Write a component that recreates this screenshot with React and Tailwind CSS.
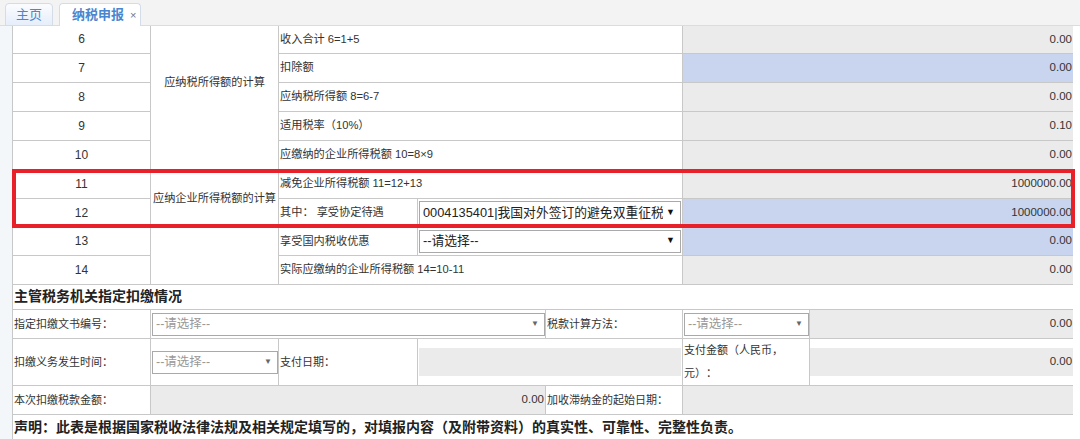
import React from 'react';

const bd = 'border border-[#c8c8c8]';

const rows = [
  { n: 6, label: '收入合计 6=1+5', v: '0.00' },
  { n: 7, label: '扣除额', v: '0.00', blue: true },
  { n: 8, label: '应纳税所得额 8=6-7', v: '0.00' },
  { n: 9, label: '适用税率（10%）', v: '0.10' },
  { n: 10, label: '应缴纳的企业所得税额 10=8×9', v: '0.00' },
];

function Select({ text, dim, small, className = '' }) {
  return (
    <div className={`flex items-center bg-white border border-[#a9a9a9] ${className}`}>
      <span className={`flex-1 min-w-0 overflow-hidden whitespace-nowrap pl-[3px] ${dim ? 'text-[#999] text-[12.5px]' : 'text-[#222] text-[12.8px]'}`}>{text}</span>
      <span className={`shrink-0 pl-[3px] pr-[5px] ${small ? 'text-[8px] text-[#666]' : 'text-[9px] text-[#111]'}`}>▼</span>
    </div>
  );
}

function Val({ v, blue }) {
  return (
    <td className={`${bd} ${blue ? 'bg-[#c9d5ee]' : 'bg-[#ebebeb]'} text-right pr-[1px] text-[11.5px] text-[#333]`}>{v}</td>
  );
}

export default function App() {
  return (
    <div className="w-[1080px] h-[439px] overflow-hidden bg-white text-[#333] [text-spacing-trim:space-all]" style={{ fontFamily: '"Liberation Sans","Noto Sans CJK SC",sans-serif' }}>
      {/* tabs */}
      <div className="h-[26px] bg-[#f3f3f3] border-b border-[#dcdcdc] flex items-end pl-[5px] gap-[6px]">
        <div className="h-[23px] w-[48px] -mb-px rounded-t-[4px] border border-[#d4dce8] bg-gradient-to-b from-[#fbfcfe] to-[#e6eefa] flex items-center justify-center text-[13px] text-[#4a86d0]">主页</div>
        <div className="h-[23px] w-[82px] -mb-px rounded-t-[4px] border border-b-0 border-[#d4dce8] bg-white flex items-center pl-[12px] gap-[6px]">
          <span className="text-[13px] font-bold text-[#4a86d0]">纳税申报</span>
          <span className="text-[11px] text-[#777]">×</span>
        </div>
      </div>

      <div className="relative flex">
        <div className="w-[12px] shrink-0 bg-[#f4f7fa]" />
        <div className="w-[1061px] shrink-0">
          <table className="w-[1061px] table-fixed border-collapse text-[11.2px]">
            <colgroup>
              <col className="w-[138px]" />
              <col className="w-[128px]" />
              <col className="w-[139px]" />
              <col className="w-[265px]" />
              <col className="w-[391px]" />
            </colgroup>
            <tbody>
              {rows.map((r, i) => (
                <tr key={r.n} className={i === 0 ? 'h-[27px]' : 'h-[29px]'}>
                  <td className={`${bd} ${i === 0 ? 'border-t-0' : ''} text-center text-[12px]`}>{r.n}</td>
                  {i === 0 && (
                    <td rowSpan={5} className={`${bd} border-t-0 text-center align-middle pb-[30px]`}>应纳税所得额的计算</td>
                  )}
                  <td colSpan={2} className={`${bd} ${i === 0 ? 'border-t-0' : ''} pl-[1px]`}>{r.label}</td>
                  <td className={`${bd} ${i === 0 ? 'border-t-0' : ''} ${r.blue ? 'bg-[#c9d5ee]' : 'bg-[#ebebeb]'} text-right pr-[1px] text-[11.5px]`}>{r.v}</td>
                </tr>
              ))}
              <tr className="h-[29px]">
                <td className={`${bd} text-center text-[12px]`}>11</td>
                <td rowSpan={2} className={`${bd} text-center whitespace-nowrap px-0`}>应纳企业所得税额的计算</td>
                <td colSpan={2} className={`${bd} pl-[1px]`}>减免企业所得税额 11=12+13</td>
                <Val v="1000000.00" />
              </tr>
              <tr className="h-[29px]">
                <td className={`${bd} text-center text-[12px]`}>12</td>
                <td className={`${bd} pl-[1px]`}>其中： 享受协定待遇</td>
                <td className={`${bd} p-0`}>
                  <Select text="0004135401|我国对外签订的避免双重征税协定" className="h-[24px] mx-px" />
                </td>
                <Val v="1000000.00" blue />
              </tr>
              <tr className="h-[28px]">
                <td className={`${bd} text-center text-[12px]`}>13</td>
                <td rowSpan={2} className={bd}></td>
                <td className={`${bd} pl-[1px]`}>享受国内税收优惠</td>
                <td className={`${bd} p-0`}>
                  <Select text="--请选择--" className="h-[23px] mx-px" />
                </td>
                <Val v="0.00" blue />
              </tr>
              <tr className="h-[29px]">
                <td className={`${bd} text-center text-[12px]`}>14</td>
                <td colSpan={2} className={`${bd} pl-[1px]`}>实际应缴纳的企业所得税额 14=10-11</td>
                <Val v="0.00" />
              </tr>
            </tbody>
          </table>

          <table className="w-[1061px] table-fixed border-collapse text-[11px]">
            <colgroup>
              <col className="w-[138px]" />
              <col className="w-[128px]" />
              <col className="w-[139px]" />
              <col className="w-[128px]" />
              <col className="w-[137px]" />
              <col className="w-[127px]" />
              <col className="w-[264px]" />
            </colgroup>
            <tbody>
              <tr className="h-[25px]">
                <td colSpan={7} className={`${bd} border-t-0 pl-px text-[14px] font-bold text-[#222]`}>主管税务机关指定扣缴情况</td>
              </tr>
              <tr className="h-[29px]">
                <td className={`${bd} pl-px`}>指定扣缴文书编号：</td>
                <td colSpan={3} className={`${bd} p-0`}>
                  <Select text="--请选择--" dim small className="h-[23px] mx-px mr-0" />
                </td>
                <td className={`${bd} pl-px`}>税款计算方法：</td>
                <td className={`${bd} p-0`}>
                  <Select text="--请选择--" dim small className="h-[23px] mx-px mr-0" />
                </td>
                <Val v="0.00" />
              </tr>
              <tr className="h-[47px]">
                <td className={`${bd} pl-px`}>扣缴义务发生时间：</td>
                <td className={`${bd} p-0`}>
                  <Select text="--请选择--" dim small className="h-[23px] mx-px mr-0" />
                </td>
                <td className={`${bd} pl-px`}>支付日期：</td>
                <td colSpan={2} className={`${bd} p-0`}>
                  <div className="h-[28px] mx-px bg-[#ebebeb]" />
                </td>
                <td className={`${bd} pl-px leading-[23px]`}>支付金额（人民币，元）：</td>
                <td className={`${bd} p-0`}>
                  <div className="h-[28px] flex items-center justify-end pr-px bg-[#ebebeb] text-[11.5px]">0.00</div>
                </td>
              </tr>
              <tr className="h-[29px]">
                <td className={`${bd} pl-px`}>本次扣缴税款金额：</td>
                <td colSpan={3} className={`${bd} bg-[#ebebeb] text-right pr-px text-[11.5px]`}>0.00</td>
                <td className={`${bd} pl-px whitespace-nowrap`}>加收滞纳金的起始日期：</td>
                <td colSpan={2} className={`${bd} bg-[#ebebeb]`}></td>
              </tr>
              <tr className="h-[25px]">
                <td colSpan={7} className={`${bd} pl-px text-[14px] font-bold text-[#222] whitespace-nowrap`}>
                  声明：此表是根据国家税收法律法规及相关规定填写的，对填报内容（及附带资料）的真实性、可靠性、完整性负责。
                </td>
              </tr>
            </tbody>
          </table>
        </div>
        <div className="flex-1 bg-white" />

        {/* highlight box */}
        <div className="absolute left-[12px] top-[143px] w-[1063px] h-[59px] border-4 border-[#e8202a] pointer-events-none" />
      </div>
    </div>
  );
}
